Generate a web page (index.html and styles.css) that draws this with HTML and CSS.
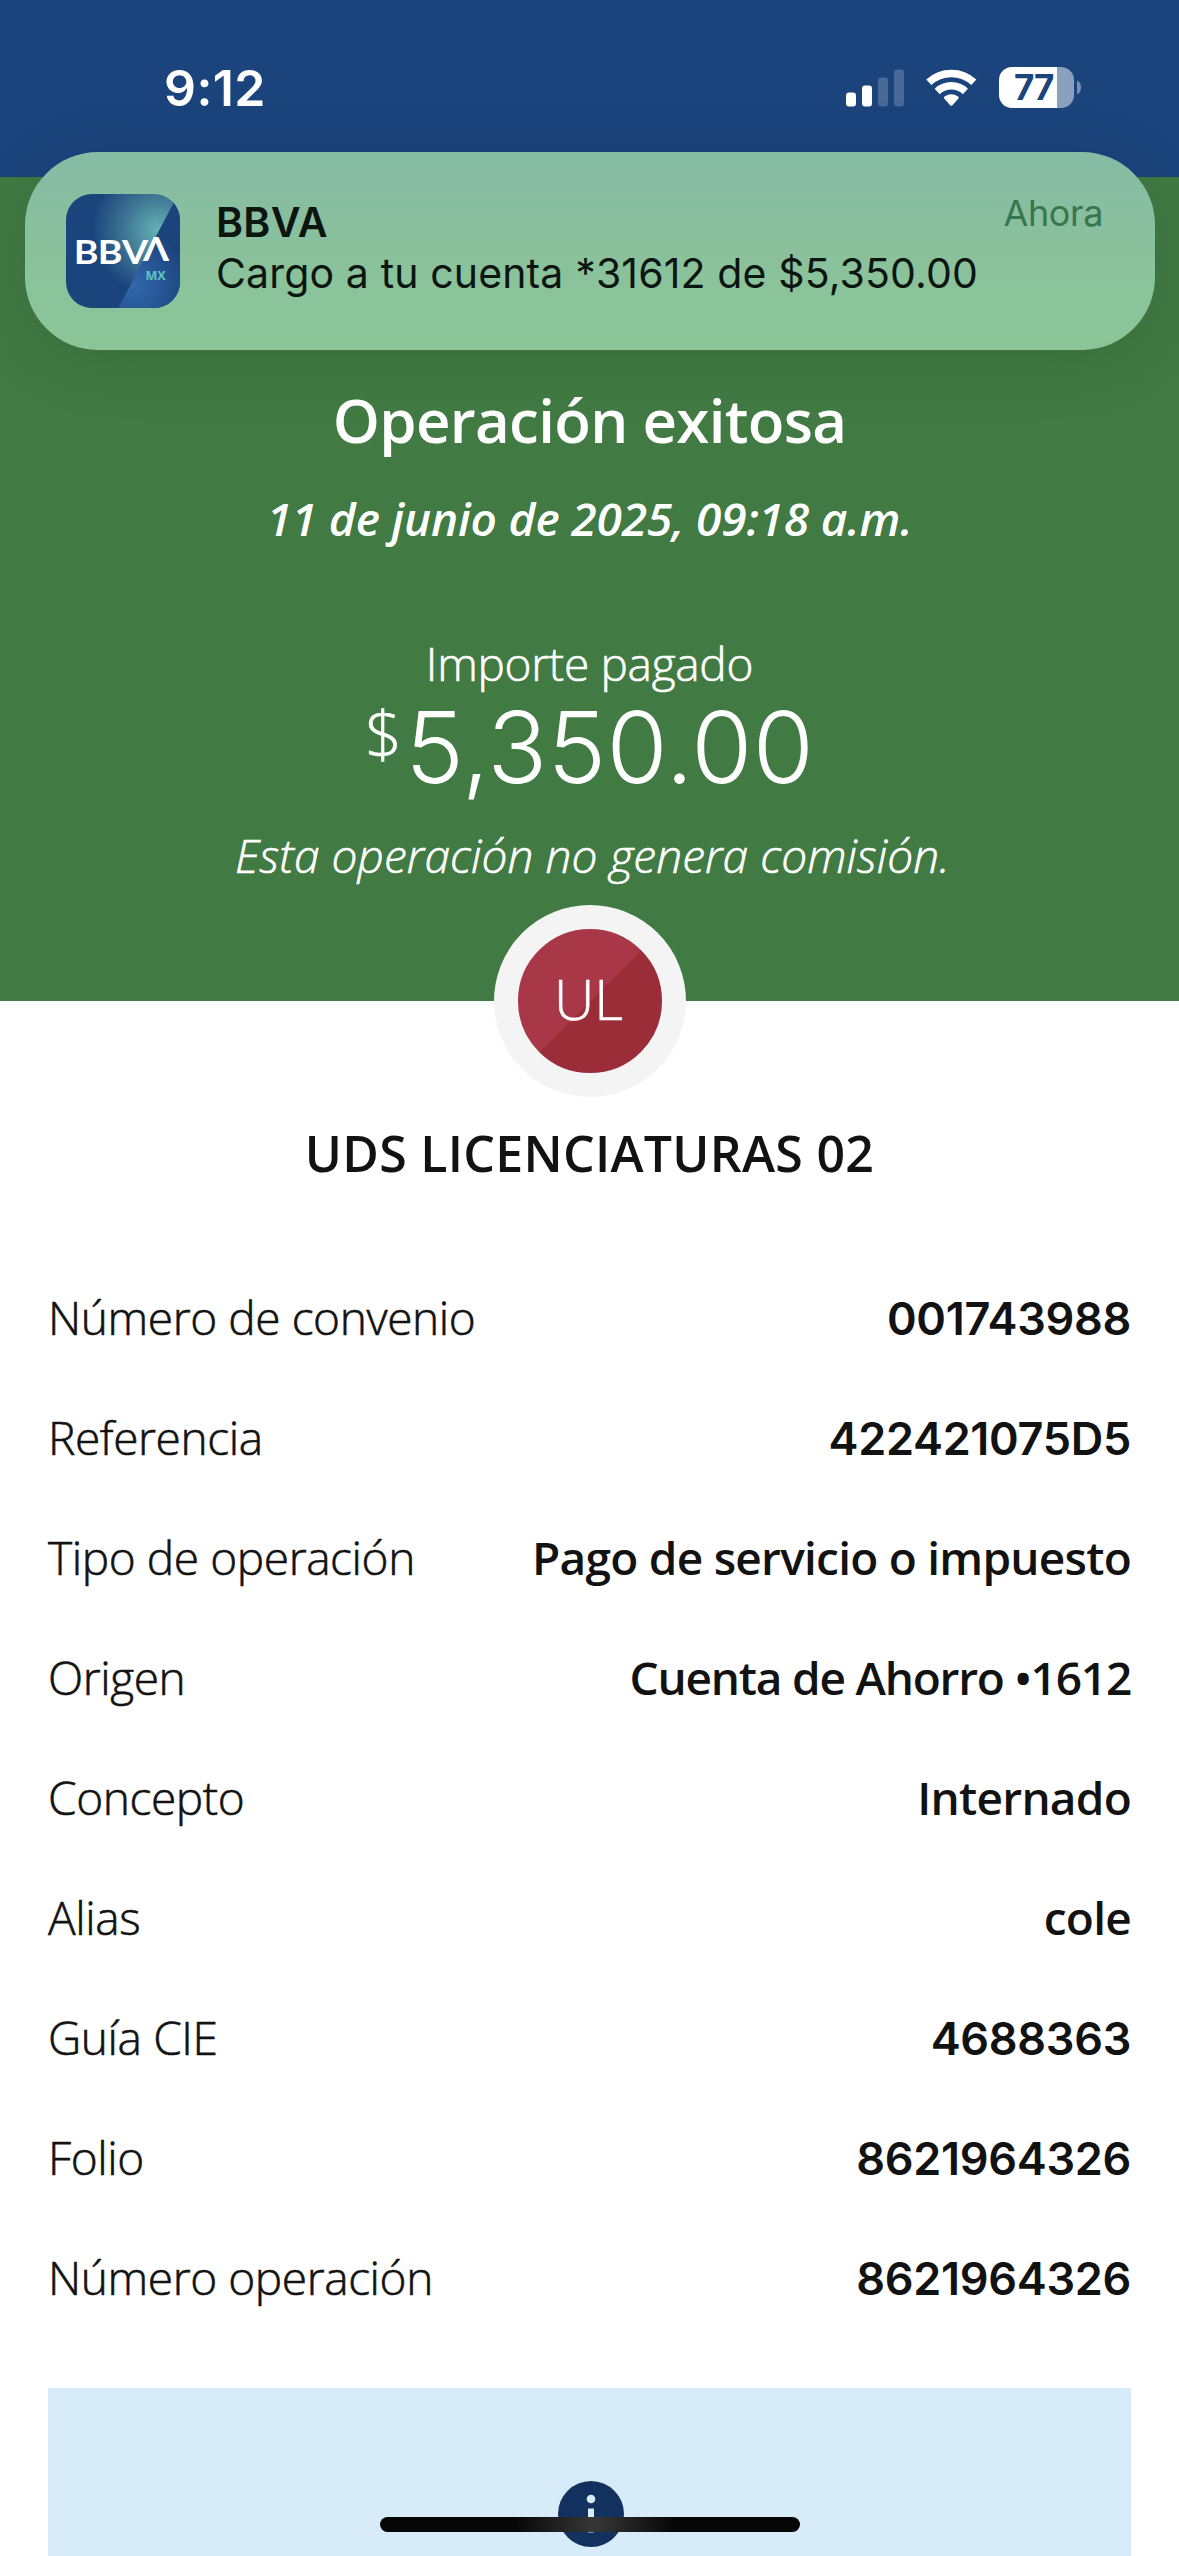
FILE: index.html
```html
<!DOCTYPE html>
<html lang="es">
<head>
  <meta charset="UTF-8">
  <title>Operación exitosa</title>
  <link rel="stylesheet" href="styles.css">
</head>

<body>

  <div class="status-bar">
    <span class="time">9:12</span>
    <div class="status-icons">
      <svg class="signal" width="58" height="38" viewBox="0 0 58 38">
        <rect x="0" y="23.5" width="10" height="14" rx="3"/>
        <rect x="16" y="16.5" width="10" height="21" rx="3"/>
        <rect class="off" x="32" y="8.5" width="10" height="29" rx="3"/>
        <rect class="off" x="48" y="0.5" width="10" height="37" rx="3"/>
      </svg>
      <svg class="wifi" width="51" height="38" viewBox="0 0 51 38">
        <path class="arc" d="M2.8 13.3A33 33 0 0 1 47.8 13.3"/>
        <path class="arc" d="M11.2 22.4A20.6 20.6 0 0 1 39.4 22.4"/>
        <path d="M18.2 29.6Q17.2 28.4 18.6 27.5Q25.3 22.8 32 27.5Q33.4 28.4 32.4 29.6L26.2 36.4Q25.3 37.3 24.4 36.4Z"/>
      </svg>
      <div class="battery">
        <div class="battery-body"><span>77</span></div>
        <div class="battery-tip"></div>
      </div>
    </div>
  </div>

  <div class="notification">
    <svg class="app-icon" width="114" height="114" viewBox="0 0 114 114">
      <defs>
        <clipPath id="iconShape"><rect width="114" height="114" rx="26"/></clipPath>
        <radialGradient id="teal" gradientUnits="userSpaceOnUse" cx="92" cy="36" r="66">
          <stop offset="0" stop-color="#66b2b6"/>
          <stop offset="0.5" stop-color="#3f7795"/>
          <stop offset="1" stop-color="#1b447c"/>
        </radialGradient>
        <radialGradient id="sky" gradientUnits="userSpaceOnUse" cx="68" cy="92" r="56">
          <stop offset="0" stop-color="#3268ad"/>
          <stop offset="1" stop-color="#1b447c"/>
        </radialGradient>
      </defs>
      <g clip-path="url(#iconShape)">
        <rect width="114" height="114" fill="url(#teal)"/>
        <path d="M112.3 0L52.3 114H114V0Z" fill="url(#sky)"/>
      </g>
      <g class="logo" transform="scale(1.14 1)">
        <text y="70" x="6.8 27.8 49.2">BBV</text>
        <text y="67" x="67.6">Λ</text>
      </g>
      <text class="logo-mx" x="79.5" y="86">MX</text>
    </svg>
    <div class="notification-text">
      <strong>BBVA</strong>
      <p>Cargo a tu cuenta *31612 de $5,350.00</p>
    </div>
    <span class="when">Ahora</span>
  </div>

  <div class="header">
    <h1>Operación exitosa</h1>
    <p class="date">11 de junio de 2025, 09:18 a.m.</p>
    <p class="amount-label">Importe pagado</p>
    <p class="amount"><span class="currency">$</span>5,350.00</p>
    <p class="fee">Esta operación no genera comisión.</p>
  </div>

  <div class="detail">
    <div class="avatar"><span>UL</span></div>
    <h2>UDS LICENCIATURAS 02</h2>

    <ul class="rows">
      <li><span>Número de convenio</span><b class="num">001743988</b></li>
      <li><span>Referencia</span><b class="num">422421075D5</b></li>
      <li><span>Tipo de operación</span><b>Pago de servicio o impuesto</b></li>
      <li><span>Origen</span><b class="account">Cuenta de Ahorro •1612</b></li>
      <li><span>Concepto</span><b>Internado</b></li>
      <li><span>Alias</span><b>cole</b></li>
      <li><span>Guía CIE</span><b class="num">4688363</b></li>
      <li><span>Folio</span><b class="num">8621964326</b></li>
      <li><span>Número operación</span><b class="num">8621964326</b></li>
    </ul>

    <div class="info-box">
      <svg width="66" height="66" viewBox="0 0 66 66">
        <circle cx="33" cy="33" r="33" fill="#13315e"/>
        <circle cx="33" cy="18" r="4.3" fill="#d8ebf9"/>
        <rect x="30" y="27.5" width="6" height="24" fill="#d8ebf9"/>
      </svg>
    </div>
  </div>

  <div class="home-indicator"></div>

</body>
</html>
```
FILE: styles.css
```css
body {
  margin: 0;
  height: 2556px;
  position: relative;
  overflow: hidden;
  background: white;
  color: #121212;
  font-family: "Open Sans", sans-serif;
  font-size: 46px;
}

h1, h2, p, ul {
  margin: 0;
  padding: 0;
}

/* status bar */
.status-bar {
  height: 177px;
  box-sizing: border-box;
  padding: 58px 98px 0 164px;
  display: flex;
  justify-content: space-between;
  align-items: flex-start;
  background: #1b447c;
  color: white;
  font-family: Inter, sans-serif;
}

.time {
  font-size: 50px;
  font-weight: 600;
  line-height: 60px;
  letter-spacing: 0.4px;
}

.status-icons {
  display: flex;
  align-items: center;
  height: 59px;
}

.signal,
.wifi {
  fill: white;
}

.signal .off {
  opacity: 0.2;
}

.wifi {
  margin: 0 22px 0 22px;
}

.wifi .arc {
  fill: none;
  stroke: white;
  stroke-width: 7.5;
}

.battery {
  display: flex;
  align-items: center;
  gap: 3px;
}

.battery-body {
  width: 75px;
  height: 41px;
  border-radius: 13px;
  background: linear-gradient(to right, white 58px, #8aa1be 58px);
  color: #1b447c;
  font-size: 35px;
  font-weight: 700;
  line-height: 41px;
}

.battery-body span {
  padding-left: 15px;
  letter-spacing: -1px;
}

.battery-tip {
  width: 4px;
  height: 13px;
  border-radius: 0 4px 4px 0 / 0 7px 7px 0;
  background: #7590b3;
}

/* push notification, sits on top of both bands */
.notification {
  position: absolute;
  top: 152px;
  left: 25px;
  width: 1130px;
  height: 198px;
  box-sizing: border-box;
  padding: 42px 52px 0 41px;
  display: flex;
  align-items: flex-start;
  border-radius: 73px;
  background: linear-gradient(to bottom, #86bba5, #8ac19c 50%, #8bc597);
  box-shadow: 0 8px 70px rgba(0, 0, 0, 0.11);
  color: #0d1511;
  font-family: Inter, sans-serif;
  font-size: 41px;
}

.notification-text {
  flex: 1;
  padding-left: 36px;
}

.notification-text strong {
  display: block;
  font-weight: 600;
  line-height: 50px;
  margin-top: 3px;
  letter-spacing: 0.3px;
}

.notification-text p {
  line-height: 50px;
  margin-top: 1px;
  letter-spacing: 0.14px;
  white-space: nowrap;
}

.when {
  color: #38774d;
  font-size: 36px;
  line-height: 44px;
  letter-spacing: -0.4px;
  margin-top: -3px;
}

.logo {
  fill: white;
  font-family: Lato, sans-serif;
  font-size: 33px;
  font-weight: 700;
}

.logo-mx {
  fill: #5fc5c2;
  font-family: "Open Sans", sans-serif;
  font-size: 12.5px;
  font-weight: 700;
}

/* green header */
.header {
  height: 824px;
  box-sizing: border-box;
  padding-top: 203px;
  background: #417a43;
  color: white;
  text-align: center;
  font-weight: 300;
  line-height: 60px;
}

.header h1 {
  font-size: 60px;
  font-weight: 600;
  line-height: 80px;
  letter-spacing: -0.7px;
}

.date {
  margin-top: 28px;
  font-weight: 600;
  font-style: italic;
  letter-spacing: -0.15px;
}

.amount-label {
  margin-top: 85px;
  letter-spacing: -0.3px;
}

.amount {
  margin-top: -1px;
  font-family: Inter, sans-serif;
  font-size: 99px;
  line-height: 110px;
  letter-spacing: 0.3px;
}

.currency {
  font-family: "Open Sans", sans-serif;
  font-size: 65px;
  line-height: 0;
  vertical-align: 25px;
  padding-right: 3px;
}

.fee {
  margin-top: 23px;
  padding-left: 6px;
  font-style: italic;
  letter-spacing: 0.1px;
}

/* the light face is too thin on its own */
.amount-label,
.currency,
.fee,
.avatar span,
.rows span {
  -webkit-text-stroke: 0.6px currentColor;
}

/* receipt */
.avatar {
  width: 144px;
  height: 144px;
  margin: -96px auto 0;
  border: 24px solid #f4f4f4;
  border-radius: 50%;
  background: linear-gradient(135deg, #a83748 50%, #9a2d38 50%);
  color: white;
  font-size: 56px;
  font-weight: 300;
  line-height: 138px;
  text-align: center;
  text-indent: -2px;
  position: relative;
}

h2 {
  margin-top: 26px;
  font-size: 50px;
  font-weight: 600;
  line-height: 60px;
  letter-spacing: 0.3px;
  text-align: center;
}

.rows {
  margin: 74px 48px 0;
  list-style: none;
}

.rows li {
  display: flex;
  justify-content: space-between;
  height: 120px;
  line-height: 120px;
}

.rows span {
  font-weight: 300;
  letter-spacing: -0.4px;
}

.rows b {
  font-weight: 600;
  letter-spacing: -0.75px;
}

.rows .num {
  font-family: Inter, sans-serif;
  font-size: 45px;
  line-height: 123px;
  letter-spacing: -0.3px;
}

.rows .account {
  letter-spacing: -1.2px;
}

.info-box {
  height: 168px;
  margin: 51px 48px 0;
  box-sizing: border-box;
  padding: 93px 0 0 2px;
  background: #d8ebf9;
  text-align: center;
  line-height: 0;
}

.home-indicator {
  position: absolute;
  left: 380px;
  top: 2517px;
  width: 420px;
  height: 15px;
  border-radius: 8px;
  background: linear-gradient(to right, #060606 32%, #353535 50%, #353535 52%, #060606 70%);
}
```
